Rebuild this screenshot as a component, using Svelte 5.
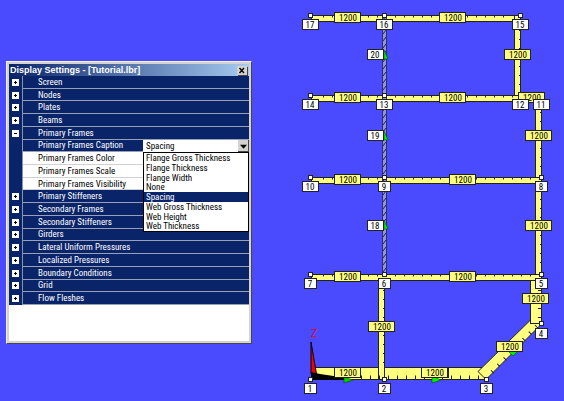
<script>
  const rows = [
    { name: 'Screen', kind: 'group' },
    { name: 'Nodes', kind: 'group' },
    { name: 'Plates', kind: 'group' },
    { name: 'Beams', kind: 'group' },
    { name: 'Primary Frames', kind: 'group', open: true },
    { name: 'Primary Frames Caption', kind: 'active' },
    { name: 'Primary Frames Color', kind: 'item' },
    { name: 'Primary Frames Scale', kind: 'item' },
    { name: 'Primary Frames Visibility', kind: 'item' },
    { name: 'Primary Stiffeners', kind: 'group' },
    { name: 'Secondary Frames', kind: 'group' },
    { name: 'Secondary Stiffeners', kind: 'group' },
    { name: 'Girders', kind: 'group' },
    { name: 'Lateral Uniform Pressures', kind: 'group' },
    { name: 'Localized Pressures', kind: 'group' },
    { name: 'Boundary Conditions', kind: 'group' },
    { name: 'Grid', kind: 'group' },
    { name: 'Flow Fleshes', kind: 'group' }
  ];
  const options = ['Flange Gross Thickness', 'Flange Thickness', 'Flange Width', 'None', 'Spacing', 'Web Gross Thickness', 'Web Height', 'Web Thickness'];
  let caption = $state('Spacing');

  // x, y, width, height
  const beams = [
    [311, 15, 209, 6], [514, 15, 6, 83], [311, 95, 230, 6], [535, 98, 6, 80],
    [311, 177, 230, 6], [535, 181, 6, 95], [311, 274, 230, 6], [311, 367, 175, 12], [378, 280, 6, 99]
  ];
  const spacings = [
    [347, 17], [452, 17], [517, 54], [347, 97], [452, 97], [531, 97], [538, 135], [347, 179],
    [462, 179], [538, 225], [347, 276], [462, 276], [535, 298], [381, 326], [347, 372], [434, 372], [509, 346]
  ];
  const marks = [
    [310, 15], [384, 15], [520, 15], [310, 95], [384, 95], [310, 177], [384, 177], [541, 177],
    [310, 274], [384, 274], [541, 274], [541, 323], [486, 379], [384, 379], [310, 379]
  ];
  const tags = [
    [17, 310, 24], [16, 384, 24], [15, 520, 24], [20, 375, 54], [14, 310, 104], [13, 384, 104],
    [12, 520, 104], [11, 541, 104], [19, 375, 135], [10, 310, 186], [9, 384, 186], [8, 541, 186],
    [18, 375, 225], [7, 310, 283], [6, 384, 283], [5, 541, 283], [4, 541, 333], [3, 486, 388], [2, 384, 388], [1, 310, 388]
  ];
  const wide = (n) => (n > 9 ? 17 : 13);
</script>

<main>
  <section class="dialog" aria-label="Display Settings">
    <header>
      <h1>Display Settings - [Tutorial.lbr]</h1>
      <button class="close" aria-label="Close">
        <svg viewBox="0 0 10 9"><path d="M2.5 2 7 7M7 2 2.5 7" stroke="#000" stroke-width="1.4" /></svg>
      </button>
    </header>
    <div class="sheet">
      <div class="rows">
        {#each rows as row}
          <div class="row {row.kind}">
            <div class="gutter">
              {#if row.kind === 'group'}
                <button class="toggle" aria-label="Toggle {row.name}" aria-expanded={!!row.open}>
                  <svg viewBox="0 0 7 7"><path d={row.open ? 'M2 3.5h3' : 'M2 3.5h3M3.5 2v3'} stroke="#000" /></svg>
                </button>
              {/if}
            </div>
            {#if row.kind === 'active'}
              <label class="name" for="caption">{row.name}</label>
              <div class="combo">
                <select id="caption" bind:value={caption}>
                  {#each options as o}<option>{o}</option>{/each}
                </select>
                <span class="arrow"><svg viewBox="0 0 11 11"><path d="M2 4h7L5.5 8z" /></svg></span>
                <ul role="listbox" aria-label="Caption choices">
                  {#each options as o}
                    <li role="option" aria-selected={o === caption}>{o}</li>
                  {/each}
                </ul>
              </div>
            {:else}
              <div class="name">{row.name}</div>
            {/if}
          </div>
        {/each}
      </div>
    </div>
  </section>

  <svg class="model" viewBox="300 0 264 401" role="img" aria-label="Frame model">
    <defs>
      <pattern id="hatch" width="3" height="7" patternUnits="userSpaceOnUse" x="383">
        <rect width="3" height="7" fill="#9494d0" />
        <path d="M0 6 3 2" stroke="#22224a" />
      </pattern>
    </defs>
    <g fill="#ffff80" stroke="#22221c" stroke-width="1">
      {#each beams as [x, y, w, h]}
        <rect x={x + 0.5} y={y + 0.5} width={w} height={h} />
      {/each}
      <path d="M531.500 319 478 371.500 486 379.500 541.500 324z" />
      <rect x="530.5" y="280.500" width="11" height="43" />
    </g>
    <g stroke="#22221c" stroke-width="2" stroke-dasharray="1 8">
      <path d="M323 16.500H512M323 96.500H532M323 178.500H532M323 275.500H532" />
      <path d="M520 30V92M541 112V172M541 190V270M384 290V370" />
    </g>
    <g stroke="#22221c" stroke-width="4" stroke-dasharray="1 8">
      <path d="M361 377.500H482M540 290V320M492 372 538 325" />
    </g>
    <rect x="383" y="18" width="3" height="256" fill="url(#hatch)" />
    <path d="M382.500 18V274M386.500 18V274" stroke="#2c2c74" />
    <g fill="#00f000" stroke="#063806" stroke-width="0.5">
      {#each [50, 131, 220] as y}
        <path d="M384 {y} 388 {y + 9}H384z" />
      {/each}
      <path d="M432 376 441 380 432 383z" />
      <path d="M508 351 518 351 513 356z" />
    </g>
    <path d="M311 342 316.500 374H311z" fill="#f00000" stroke="#000" />
    <path d="M311 372 320 374 347 378V380H311z" />
    <path d="M344 377 353 380 344 383z" fill="#00d000" stroke="#063806" stroke-width="0.5" />
    <text class="axis" x="314" y="337">Z</text>

    {#each marks as [x, y]}
      <rect x={x - 1.5} y={y - 1.5} width="4" height="4" fill="#fff" stroke="#222" />
    {/each}
    <rect x="421.5" y="367.5" width="27" height="10" fill="#ffff80" stroke="#22221c" />
    {#each spacings as [x, y]}
      <rect x={x - 12.5} y={y - 4.5} width="26" height="10" fill="#ffff80" stroke="#22221c" />
      <text x={x + 1} y={y + 4}>1200</text>
    {/each}
    {#each tags as [n, x, y]}
      <rect x={x + 0.5 - (wide(n) - 1) / 2} y={y - 4.5} width={wide(n) - 1} height="10" fill="#fff" stroke="#222" />
      <text {x} y={y + 4}>{n}</text>
    {/each}
  </svg>
</main>

<style>
  :global(body) { margin: 0; background: #4a4aff; }
  main {
    display: flex;
    align-items: flex-start;
    gap: 48px;
    padding-left: 6px;
    font: 9px/12px "Roboto Condensed", Roboto, "Liberation Sans", Arial, sans-serif;
    color: #000;
  }
  .dialog {
    box-sizing: border-box;
    flex: 0 0 246px;
    min-width: 0;
    margin-top: 61px;
    padding: 2px;
    background: #d6d3ce;
    border: 1px solid;
    border-color: #f4f2ee #45454a #45454a #f4f2ee;
  }
  header {
    display: flex;
    align-items: center;
    justify-content: space-between;
    height: 12px;
    padding: 0 2px 0 1px;
    background: linear-gradient(90deg, #0a246a, #a6caf0);
  }
  h1 { margin: 0; color: #fff; font: bold 9px/12px "Liberation Sans", Arial, sans-serif; white-space: nowrap; }
  button { padding: 0; border: 0; }
  button svg, .arrow svg { display: block; width: 100%; height: 100%; }
  .close {
    width: 10px;
    height: 9px;
    background: #d6d3ce;
    box-shadow: 1px 1px 0 #45454a;
  }
  .sheet { background: #fff; padding-bottom: 36px; }
  .rows { display: flex; flex-direction: column; height: 229px; }
  .row { display: flex; flex: 1 1 0; min-height: 0; }
  .gutter {
    display: flex;
    align-items: center;
    justify-content: center;
    flex: 0 0 13px;
    background: #0a246a;
    border-right: 1px solid #8a93ae;
  }
  .toggle { width: 7px; height: 7px; background: #fff; }
  .name {
    display: flex;
    align-items: center;
    flex: 1;
    min-width: 0;
    padding-left: 15px;
    border-bottom: 1px solid #98a0b6;
    background: #0a246a;
    color: #fff;
    white-space: nowrap;
  }
  .item .name { background: #fff; color: #000; border-color: #d0d0d0; }
  .combo { position: relative; display: flex; flex: 0 0 106px; background: #fff; }
  select {
    appearance: none;
    flex: 1;
    min-width: 0;
    padding: 0 0 0 3px;
    border: 0;
    background: #fff;
    color: #000;
    font: inherit;
  }
  .arrow { width: 11px; background: #d6d3ce; box-shadow: inset -1px -1px 0 #45454a; pointer-events: none; }
  ul {
    position: absolute;
    z-index: 1;
    top: 100%;
    left: 0;
    box-sizing: border-box;
    display: flex;
    flex-direction: column;
    width: 100%;
    height: 80px;
    margin: 0;
    padding: 0;
    list-style: none;
    background: #fff;
    border: 1px solid #000;
  }
  li { display: flex; align-items: center; flex: 1 1 0; min-height: 0; padding-left: 2px; white-space: nowrap; }
  li[aria-selected='true'] { background: #0a246a; color: #fff; }
  .model { flex: 1 1 0; min-width: 0; display: block; }
  .model text { text-anchor: middle; }
  .model .axis { fill: #f00020; font-family: "Liberation Sans", Arial, sans-serif; font-size: 10px; }
</style>
